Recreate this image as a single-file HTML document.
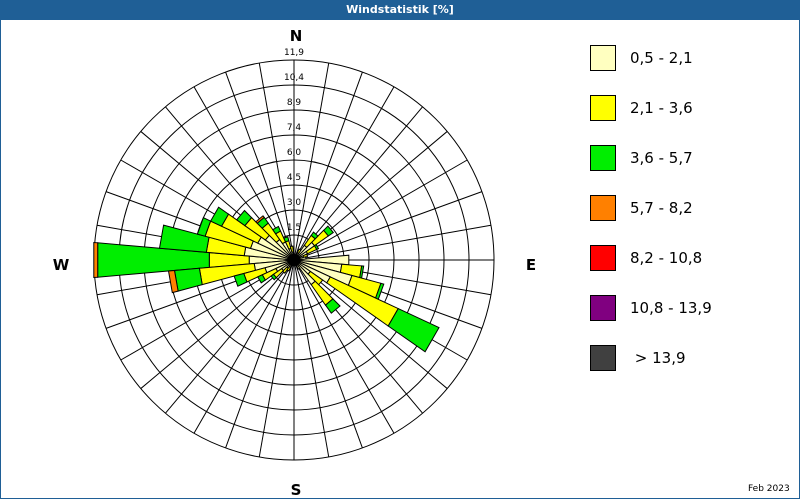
<!DOCTYPE html>
<html><head><meta charset="utf-8"><style>
html,body{margin:0;padding:0;width:800px;height:500px;overflow:hidden;background:#fff;font-family:"DejaVu Sans","Liberation Sans",sans-serif}
#frame{position:absolute;left:0;top:0;width:798px;height:498px;border:1px solid #1f5f96;border-top:none;}
#title{position:absolute;left:0;top:0;width:800px;height:20px;background:#1f5f96;color:#fff;font-size:11px;font-weight:bold;text-align:center;line-height:19px}
.lg{position:absolute;left:590px;width:24px;height:24px;border:1px solid #000}
.lt{position:absolute;left:630px;font-size:15px;color:#000}
</style></head><body>
<div id="frame"></div>
<div id="title">Windstatistik [%]</div>
<svg id="s" width="800" height="500" style="position:absolute;left:0;top:0" xmlns="http://www.w3.org/2000/svg"></svg>
<div class="lg" style="top:45px;background:#ffffc0"></div><div class="lt" style="top:49px">0,5 - 2,1</div>
<div class="lg" style="top:95px;background:#ffff00"></div><div class="lt" style="top:99px">2,1 - 3,6</div>
<div class="lg" style="top:145px;background:#00ee00"></div><div class="lt" style="top:149px">3,6 - 5,7</div>
<div class="lg" style="top:195px;background:#ff8000"></div><div class="lt" style="top:199px">5,7 - 8,2</div>
<div class="lg" style="top:245px;background:#ff0000"></div><div class="lt" style="top:249px">8,2 - 10,8</div>
<div class="lg" style="top:295px;background:#800080"></div><div class="lt" style="top:299px">10,8 - 13,9</div>
<div class="lg" style="top:345px;background:#404040"></div><div class="lt" style="top:349px">&nbsp;&gt; 13,9</div>
<div style="position:absolute;left:748px;top:484px;font-size:9px">Feb 2023</div>
<script>
var cx=294,cy=260,s='';
var C=['#ffffc0','#ffff00','#00ee00','#ff8000'];
for(var k=1;k<=8;k++){s+='<circle cx="'+cx+'" cy="'+cy+'" r="'+(25*k)+'" fill="none" stroke="#000" stroke-width="1"/>';}
for(var a=0;a<360;a+=10){var t=a*Math.PI/180;s+='<line x1="'+cx+'" y1="'+cy+'" x2="'+(cx+200*Math.sin(t))+'" y2="'+(cy-200*Math.cos(t))+'" stroke="#000" stroke-width="1"/>';}
function P(a,r){var t=a*Math.PI/180;return (cx+r*Math.sin(t)).toFixed(1)+','+(cy-r*Math.cos(t)).toFixed(1);}
var B=[[270,[45,85,197,201]],[280,[50,88,135]],[260,[40,95,120,126]],[290,[45,92,100]],[300,[40,80,92]],[310,[35,60,70]],[320,[25,45,52,54]],[330,[20,32,37]],[340,[12,20,24]],[350,[8,14]],[250,[30,52,62]],[240,[20,35,40]],[230,[15,25,28]],[220,[10,16]],[210,[8,12]],[200,[6]],[180,[5]],[90,[55]],[100,[48,68,70]],[110,[60,90,93]],[120,[40,115,160]],[140,[30,55,65]],[130,[20,35]],[150,[10]],[60,[15,25,27]],[50,[25,42,48]],[40,[18,30,34]],[70,[10,14]],[80,[12]],[30,[8,12]],[10,[5]],[0,[6]]];
B.forEach(function(b){var a=b[0],r0=0;b[1].forEach(function(r,i){var a1=a-5,a2=a+5;s+='<polygon points="'+P(a1,r0)+' '+P(a1,r)+' '+P(a2,r)+' '+P(a2,r0)+'" fill="'+C[i]+'" stroke="#000" stroke-width="1"/>';r0=r;});});
s+='<circle cx="'+cx+'" cy="'+cy+'" r="6" fill="#000"/>';
var L=['1,5','3,0','4,5','6,0','7,4','8,9','10,4','11,9'];
L.forEach(function(l,i){s+='<text x="'+cx+'" y="'+(cy-25*(i+1)-5)+'" font-size="9" text-anchor="middle" fill="#000" font-family="DejaVu Sans,sans-serif">'+l+'</text>';});
s+='<g font-family="DejaVu Sans,Liberation Sans,sans-serif" font-weight="bold" font-size="15" text-anchor="middle"><text x="296" y="41">N</text><text x="296" y="495">S</text><text x="61" y="270">W</text><text x="531" y="270">E</text></g>';
document.getElementById('s').innerHTML=s;
</script>
</body></html>
